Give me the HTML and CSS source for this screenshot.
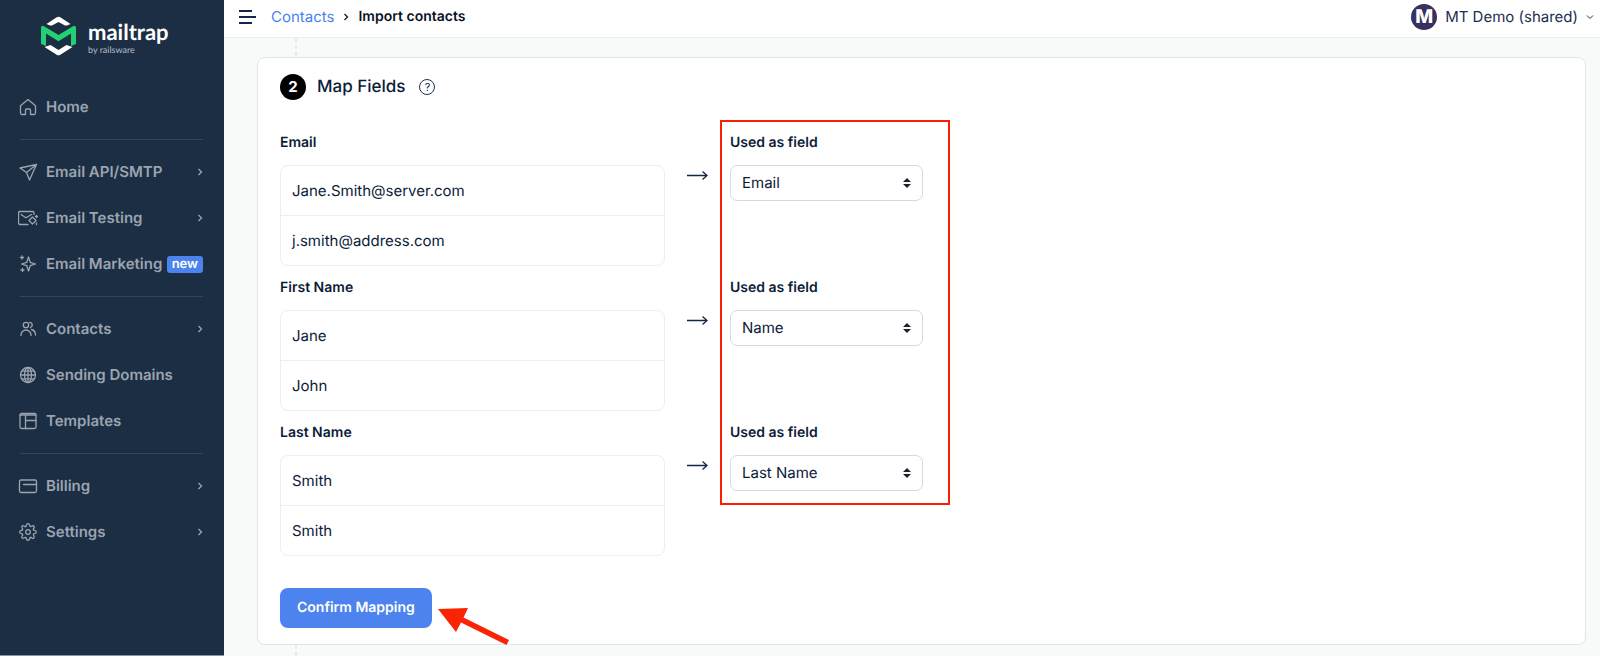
FILE: index.html
```html
<!DOCTYPE html>
<html lang="en">
<head>
    <meta charset="UTF-8">
    <meta name="viewport" content="width=device-width, initial-scale=1.0">
    <title>Import contacts</title>
    <link rel="stylesheet" href="styles.css">
</head>
<body>
    <aside class="sidebar">
        <a href="#" class="logo">
            <svg width="35" height="40" viewBox="0 0 35 40">
                <path d="M5.500 8 15.700 1.300Q17.500 0 19.300 1.300L29.500 8 26 9.500H24L17.500 6 11 9.500H9Z" fill="#fff"/>
                <path d="M0 12Q0 8.600 3 10.200L17.500 19 32 10.200Q35 8.600 35 12V28L30 30V17.500L17.500 25.200 5 17.500V30L0 28Z" fill="#22d172"/>
                <path d="M3.500 31 9.500 29 17.500 34 25.500 29 31.500 31 19.300 38.700Q17.500 39.800 15.700 38.700Z" fill="#fff"/>
            </svg>
            <span class="logo-text">
                <span class="logo-name">mailtrap</span>
                <span class="logo-by">by railsware</span>
            </span>
        </a>
        <nav class="menu">
            <a href="#" class="menu-item">
                <svg class="icon" viewBox="0 0 20 20"><path d="M2.500 8.700 10 2.500l7.500 6.200v7.300a1.500 1.500 0 0 1-1.500 1.500h-3.500V13a1 1 0 0 0-1-1h-3a1 1 0 0 0-1 1v4.500H4A1.500 1.500 0 0 1 2.500 16Z"/></svg>
                <span>Home</span>
            </a>
            <hr>
            <a href="#" class="menu-item">
                <svg class="icon" viewBox="0 0 20 20"><path d="M2 6 18.500 2.500 11.500 18 8.500 10.500ZM8.500 10.500 18.500 2.500"/></svg>
                <span>Email API/SMTP</span>
                <svg class="chevron" viewBox="0 0 6 8"><path d="M1.500 1 4.500 4 1.500 7"/></svg>
            </a>
            <a href="#" class="menu-item">
                <svg class="icon" viewBox="0 0 20 20"><path d="M10 16.500H2A1.500 1.500 0 0 1 .5 15V5A1.500 1.500 0 0 1 2 3.500H14.500A1.500 1.500 0 0 1 16 5V6.500M3 6.500 8 9.800 13.500 6.500M14.500 9 18 12.500 14.500 16 11 12.500ZM18.500 7.500V9.500M17.500 8.500H19.500M18.500 15V16.500"/></svg>
                <span>Email Testing</span>
                <svg class="chevron" viewBox="0 0 6 8"><path d="M1.500 1 4.500 4 1.500 7"/></svg>
            </a>
            <a href="#" class="menu-item">
                <svg class="icon" viewBox="0 0 20 20"><path d="M10.500 3 12.200 8.300 17.500 10 12.200 11.700 10.500 17 8.800 11.700 3.500 10 8.800 8.300ZM4 2V5M2.500 3.500H5.500M4.500 14.500V17.500M3 16H6"/></svg>
                <span>Email Marketing</span>
                <span class="badge">new</span>
            </a>
            <hr>
            <a href="#" class="menu-item">
                <svg class="icon" viewBox="0 0 20 20"><circle cx="8" cy="6" r="2.700"/><path d="M3 16.500V16A5 5 0 0 1 13 16V16.500M11.500 3.300A2.700 2.700 0 0 1 12.500 8.500M13.500 10.500Q17.500 11.500 17.500 16"/></svg>
                <span>Contacts</span>
                <svg class="chevron" viewBox="0 0 6 8"><path d="M1.500 1 4.500 4 1.500 7"/></svg>
            </a>
            <a href="#" class="menu-item">
                <svg class="icon" viewBox="0 0 20 20"><circle cx="10" cy="10" r="7.500"/><ellipse cx="10" cy="10" rx="3.500" ry="7.500"/><path d="M10 2.500V17.500M2.500 10H17.500M3.500 6.200H16.500M3.500 13.800H16.500"/></svg>
                <span>Sending Domains</span>
            </a>
            <a href="#" class="menu-item">
                <svg class="icon" viewBox="0 0 20 20"><rect x="2" y="2.500" width="16" height="15" rx="1.500"/><path d="M2 4H18M7.500 4V17.500M7.500 9.500H18"/></svg>
                <span>Templates</span>
            </a>
            <hr>
            <a href="#" class="menu-item">
                <svg class="icon" viewBox="0 0 20 20"><rect x="1.500" y="4" width="17" height="12.500" rx="1.500"/><path d="M5.500 8.500H18.500"/></svg>
                <span>Billing</span>
                <svg class="chevron" viewBox="0 0 6 8"><path d="M1.500 1 4.500 4 1.500 7"/></svg>
            </a>
            <a href="#" class="menu-item">
                <svg class="icon" viewBox="0 0 20 20"><circle cx="10" cy="10" r="2.300"/><path d="M8.300 3.500Q8.700 1.700 10 1.700T11.700 3.500 13.600 4.300Q15.100 3.300 16 4.200T15.700 6.500 16.500 8.400Q18.300 8.700 18.300 10T16.500 11.700 15.700 13.600Q16.800 15.100 15.900 16T13.600 15.700 11.700 16.500Q11.300 18.300 10 18.300T8.300 16.500 6.400 15.700Q4.900 16.800 4 15.900T4.300 13.600 3.500 11.700Q1.700 11.300 1.700 10T3.500 8.300 4.300 6.400Q3.200 4.900 4.100 4T6.400 4.300 8.300 3.500Z"/></svg>
                <span>Settings</span>
                <svg class="chevron" viewBox="0 0 6 8"><path d="M1.500 1 4.500 4 1.500 7"/></svg>
            </a>
        </nav>
    </aside>

    <div class="page">
        <header class="topbar">
            <button class="toggle" type="button" aria-label="Toggle menu">
                <svg width="18" height="14" viewBox="0 0 18 14"><path d="M0 1H13M0 7H17M0 13H13"/></svg>
            </button>
            <nav class="breadcrumbs">
                <a href="#">Contacts</a>
                <svg class="chevron" viewBox="0 0 6 8"><path d="M1.500 1 4.500 4 1.500 7"/></svg>
                <span class="current">Import contacts</span>
            </nav>
            <button class="account" type="button">
                <span class="avatar">M</span>
                <span>MT Demo (shared)</span>
                <svg width="8" height="6" viewBox="0 0 8 6"><path d="M1 1.500 4 4.500 7 1.500"/></svg>
            </button>
        </header>

        <main class="content">
            <div class="connector"></div>
            <section class="card">
                <div class="card-header">
                    <span class="step">2</span>
                    <h1>Map Fields</h1>
                    <button class="help" type="button" aria-label="Help">?</button>
                </div>

                <div class="mapping">
                    <div class="map-row">
                        <div>
                            <h2>Email</h2>
                            <ul class="samples">
                                <li>Jane.Smith@server.com</li>
                                <li>j.smith@address.com</li>
                            </ul>
                        </div>
                        <svg class="arrow" viewBox="0 0 21 11"><path d="M0 5.500H20M15.500 1.500 20 5.500 15.500 9.500"/></svg>
                        <div>
                            <label for="field-email">Used as field</label>
                            <div class="select">
                                <select id="field-email">
                                    <option selected>Email</option>
                                    <option>Name</option>
                                    <option>Last Name</option>
                                </select>
                                <svg viewBox="0 0 8 10"><path d="M0 4 4 0 8 4ZM0 6H8L4 10Z"/></svg>
                            </div>
                        </div>
                    </div>
                    <div class="map-row">
                        <div>
                            <h2>First Name</h2>
                            <ul class="samples">
                                <li>Jane</li>
                                <li>John</li>
                            </ul>
                        </div>
                        <svg class="arrow" viewBox="0 0 21 11"><path d="M0 5.500H20M15.500 1.500 20 5.500 15.500 9.500"/></svg>
                        <div>
                            <label for="field-name">Used as field</label>
                            <div class="select">
                                <select id="field-name">
                                    <option>Email</option>
                                    <option selected>Name</option>
                                    <option>Last Name</option>
                                </select>
                                <svg viewBox="0 0 8 10"><path d="M0 4 4 0 8 4ZM0 6H8L4 10Z"/></svg>
                            </div>
                        </div>
                    </div>
                    <div class="map-row">
                        <div>
                            <h2>Last Name</h2>
                            <ul class="samples">
                                <li>Smith</li>
                                <li>Smith</li>
                            </ul>
                        </div>
                        <svg class="arrow" viewBox="0 0 21 11"><path d="M0 5.500H20M15.500 1.500 20 5.500 15.500 9.500"/></svg>
                        <div>
                            <label for="field-last-name">Used as field</label>
                            <div class="select">
                                <select id="field-last-name">
                                    <option>Email</option>
                                    <option>Name</option>
                                    <option selected>Last Name</option>
                                </select>
                                <svg viewBox="0 0 8 10"><path d="M0 4 4 0 8 4ZM0 6H8L4 10Z"/></svg>
                            </div>
                        </div>
                    </div>
                    <div class="highlight"></div>
                </div>

                <div class="actions">
                    <button class="confirm" type="button">Confirm Mapping</button>
                    <svg class="pointer" viewBox="0 0 72 40"><path d="M0 2 30 1 25.500 10.500 71 33 68.500 38 23 15.500 18 25Z"/></svg>
                </div>
            </section>
            <div class="connector last"></div>
        </main>
    </div>
</body>
</html>
```

FILE: styles.css
```css
* {
    box-sizing: border-box;
}
body {
    margin: 0;
    min-height: 100vh;
    display: flex;
    font-family: Inter, "Liberation Sans", sans-serif;
    font-size: 15px;
    line-height: 20px;
    text-rendering: geometricPrecision;
    color: #0c1c38;
    background-color: #f8faf9;
}
a {
    text-decoration: none;
}
button {
    font: inherit;
    color: inherit;
    text-rendering: inherit;
    border: 0;
    padding: 0;
    background: none;
    cursor: pointer;
}
svg {
    flex: none;
    display: block;
}

/* Sidebar */
.sidebar {
    width: 224px;
    flex: none;
    background-color: #1c2e44;
    border-bottom: 1px solid #8a94a1;
}
.logo {
    display: flex;
    gap: 12px;
    padding: 16px 0 0 41px;
    height: 84px;
    color: #fff;
}
.logo-text {
    display: flex;
    flex-direction: column;
    padding-top: 4px;
}
.logo-name {
    font-family: Lato, sans-serif;
    font-weight: 700;
    font-size: 22px;
    line-height: 24px;
}
.logo-by {
    font-family: Lato, sans-serif;
    font-size: 9px;
    line-height: 12px;
    color: #b4bcc6;
}
.menu-item {
    display: flex;
    align-items: center;
    height: 46px;
    padding: 0 21px 0 18px;
    color: #9ba4b0;
    font-size: 15px;
    font-weight: 600;
}
.menu-item .icon {
    width: 20px;
    height: 20px;
    margin-right: 8px;
    fill: none;
    stroke: #9ba4b0;
    stroke-width: 1.3;
    stroke-linejoin: round;
    stroke-linecap: round;
}
.chevron {
    width: 6px;
    height: 8px;
    fill: none;
    stroke: currentColor;
    stroke-width: 1.3;
}
.menu-item .chevron {
    margin-left: auto;
}
.menu hr {
    margin: 9px 21px 9px 20px;
    border: 0;
    height: 1px;
    background-color: #34465f;
}
.badge {
    margin-left: auto;
    padding: 0 5px;
    border-radius: 3px;
    background-color: #4c83ee;
    color: #fff;
    font-size: 13px;
    line-height: 17px;
}

/* Top bar */
.page {
    flex: 1;
    min-width: 0;
    display: flex;
    flex-direction: column;
}
.topbar {
    height: 38px;
    padding: 0 6px 4px 15px;
    display: flex;
    align-items: center;
    background-color: #fff;
    border-bottom: 1px solid #eceeee;
}
.toggle svg {
    stroke: #12284a;
    stroke-width: 2;
}
.breadcrumbs {
    display: flex;
    align-items: center;
    gap: 9px;
    margin-left: 14px;
}
.breadcrumbs a {
    color: #4c83ee;
}
.current {
    font-size: 14px;
    font-weight: 600;
    color: #0a1226;
}
.account {
    margin-left: auto;
    display: flex;
    align-items: center;
    color: #1c2f50;
}
.account svg {
    margin-left: 8px;
    fill: none;
    stroke: #1c2f50;
}
.avatar {
    width: 26px;
    margin-right: 8px;
    border-radius: 50%;
    background-color: #38305f;
    color: #fff;
    font-size: 19px;
    font-weight: 800;
    line-height: 26px;
    text-align: center;
}

/* Mapping card */
.content {
    flex: 1;
    display: flex;
    flex-direction: column;
    padding: 0 14px 0 33px;
}
.connector {
    width: 2px;
    height: 19px;
    margin-left: 38px;
    background: repeating-linear-gradient(#e8ebec 0 4px, transparent 4px 7px);
}
.connector.last {
    height: auto;
    flex: 1;
}
.card {
    padding: 16px 22px;
    background-color: #fff;
    border: 1px solid #e2e4ec;
    border-radius: 8px;
}
.card-header {
    display: flex;
    align-items: center;
    margin-bottom: 21px;
}
.step {
    width: 26px;
    border-radius: 50%;
    background-color: #000;
    color: #fff;
    font-weight: 700;
    line-height: 26px;
    text-align: center;
}
h1 {
    margin: 0 14px 0 11px;
    font-size: 17px;
    font-weight: 500;
    line-height: 26px;
}
.help {
    width: 16px;
    height: 16px;
    border: 1px solid #1c3357;
    border-radius: 50%;
    font-size: 11px;
    line-height: 14px;
}
.mapping {
    position: relative;
}
.map-row {
    display: grid;
    grid-template-columns: minmax(0, 385px) 21px 193px;
    column-gap: 22px;
}
h2,
label {
    display: block;
    margin: 0;
    padding: 12px 0;
    font-size: 14px;
    font-weight: 600;
    line-height: 20px;
}
.samples {
    list-style: none;
    margin: 0;
    padding: 0;
    border: 1px solid #eceef0;
    border-radius: 8px;
}
.samples li {
    padding: 0 11px;
    line-height: 49px;
}
.samples li + li {
    border-top: 1px solid #eceef0;
}
.arrow {
    width: 21px;
    height: 11px;
    margin-top: 49px;
    fill: none;
    stroke: #12284a;
    stroke-width: 1.3;
}
.select {
    position: relative;
}
.select select {
    appearance: none;
    width: 100%;
    height: 36px;
    padding: 0 11px;
    border: 1px solid #d6d9de;
    border-radius: 7px;
    background-color: #fff;
    color: inherit;
    font: inherit;
    text-rendering: inherit;
}
.select svg {
    position: absolute;
    top: 13px;
    right: 12px;
    width: 8px;
    height: 10px;
    fill: #1c232d;
    pointer-events: none;
}
.highlight {
    position: absolute;
    top: -1px;
    bottom: 51px;
    left: 440px;
    width: 230px;
    border: 2px solid #fa1e05;
    pointer-events: none;
}
.actions {
    position: relative;
    margin-top: 32px;
}
.confirm {
    display: block;
    height: 40px;
    padding: 0 17px;
    border-radius: 8px;
    background-color: #4c83ee;
    color: #fff;
    font-size: 14px;
    font-weight: 600;
}
.pointer {
    position: absolute;
    top: 19px;
    left: 158px;
    width: 72px;
    height: 40px;
    fill: #fa2405;
}
```
